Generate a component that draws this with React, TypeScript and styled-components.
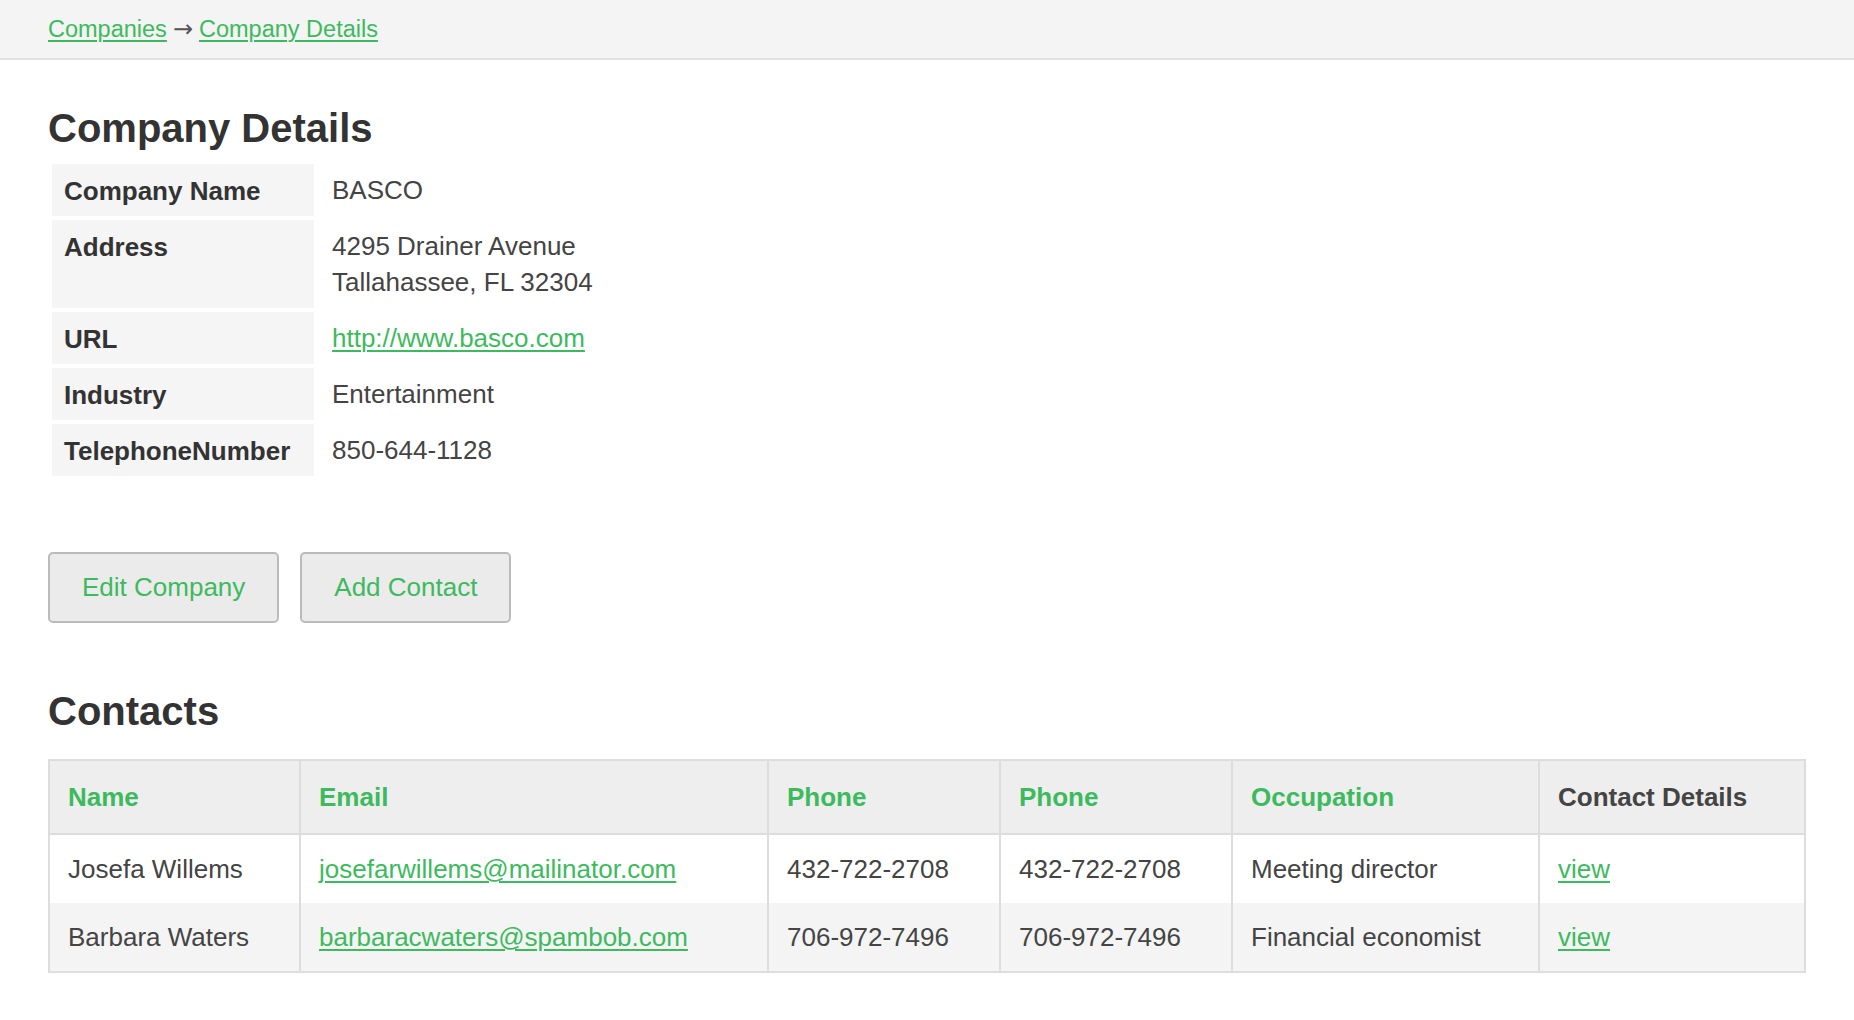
import React from "react";
import styled, { createGlobalStyle } from "styled-components";

interface Contact {
  name: string;
  email: string;
  phone: string;
  mobile: string;
  occupation: string;
}

const contacts: Contact[] = [
  {
    name: "Josefa Willems",
    email: "josefarwillems@mailinator.com",
    phone: "432-722-2708",
    mobile: "432-722-2708",
    occupation: "Meeting director",
  },
  {
    name: "Barbara Waters",
    email: "barbaracwaters@spambob.com",
    phone: "706-972-7496",
    mobile: "706-972-7496",
    occupation: "Financial economist",
  },
];

const columnWidths = [251, 468, 232, 232, 307];

const GREEN = "#3dba5e";

const GlobalStyle = createGlobalStyle`
  body {
    margin: 0;
    background: #fff;
    color: #444;
    font-family: "Liberation Sans", Arial, Helvetica, sans-serif;
  }
`;

const App = () => {
  return (
    <>
      <GlobalStyle />
      <Breadcrumbs>
        <Link href="#">Companies</Link>
        <Arrow>→</Arrow>
        <Link href="#">Company Details</Link>
      </Breadcrumbs>

      <Main>
        <Heading>Company Details</Heading>
        <DetailsTable>
          <tbody>
            <tr>
              <Label>Company Name</Label>
              <Value>BASCO</Value>
            </tr>
            <tr>
              <Label>Address</Label>
              <Value>
                4295 Drainer Avenue
                <br />
                Tallahassee, FL 32304
              </Value>
            </tr>
            <tr>
              <Label>URL</Label>
              <Value>
                <Link href="#">http://www.basco.com</Link>
              </Value>
            </tr>
            <tr>
              <Label>Industry</Label>
              <Value>Entertainment</Value>
            </tr>
            <tr>
              <Label>TelephoneNumber</Label>
              <Value>850-644-1128</Value>
            </tr>
          </tbody>
        </DetailsTable>

        <Actions>
          <Button>Edit Company</Button>
          <Button>Add Contact</Button>
        </Actions>

        <SectionHeading>Contacts</SectionHeading>
        <ContactsTable>
          <colgroup>
            {columnWidths.map((w, i) => (
              <col key={i} style={{ width: w }} />
            ))}
            <col />
          </colgroup>
          <thead>
            <tr>
              <HeadCell sortable>Name</HeadCell>
              <HeadCell sortable>Email</HeadCell>
              <HeadCell sortable>Phone</HeadCell>
              <HeadCell sortable>Phone</HeadCell>
              <HeadCell sortable>Occupation</HeadCell>
              <HeadCell>Contact Details</HeadCell>
            </tr>
          </thead>
          <tbody>
            {contacts.map((c) => (
              <Row key={c.email}>
                <Cell>{c.name}</Cell>
                <Cell>
                  <Link href="#">{c.email}</Link>
                </Cell>
                <Cell>{c.phone}</Cell>
                <Cell>{c.mobile}</Cell>
                <Cell>{c.occupation}</Cell>
                <Cell>
                  <Link href="#">view</Link>
                </Cell>
              </Row>
            ))}
          </tbody>
        </ContactsTable>
      </Main>
    </>
  );
};

export default App;

const Breadcrumbs = styled.nav`
  display: flex;
  align-items: center;
  height: 58px;
  padding: 0 48px;
  background: #f4f4f4;
  border-bottom: 2px solid #e1e1e1;
  font-size: 23.5px;
  line-height: 34px;
`;

const Link = styled.a`
  color: ${GREEN};
  text-decoration: underline;
  text-underline-offset: 3px;
  text-decoration-thickness: 2px;
`;

const Arrow = styled.span`
  color: #555;
  margin: 0 6px;
  font-family: "DejaVu Sans", sans-serif;
  font-size: 24px;
`;

const Main = styled.main`
  padding: 0 48px 60px;
`;

const Heading = styled.h1`
  margin: 44px 0 8px;
  font-size: 40px;
  line-height: 48px;
  font-weight: 700;
  color: #333;
`;

const SectionHeading = styled(Heading)`
  margin: 64px 0 24px;
`;

const DetailsTable = styled.table`
  border-collapse: separate;
  border-spacing: 4px;
  font-size: 26px;
  line-height: 36px;
`;

const Label = styled.th`
  width: 238px;
  padding: 9px 12px 7px;
  background: #f5f5f5;
  color: #333;
  font-weight: 700;
  text-align: left;
  vertical-align: top;
`;

const Value = styled.td`
  padding: 8px 14px;
  color: #444;
  vertical-align: top;
`;

const Actions = styled.div`
  display: flex;
  gap: 21px;
  margin-top: 72px;
`;

const Button = styled.button`
  padding: 15px 32px;
  background: #ebebeb;
  border: 2px solid #bbb;
  border-radius: 5px;
  color: ${GREEN};
  font-family: inherit;
  font-size: 26px;
  line-height: 37px;
  cursor: pointer;
`;

const ContactsTable = styled.table`
  width: 100%;
  table-layout: fixed;
  border-collapse: collapse;
  border: 2px solid #ddd;
  font-size: 26px;
  line-height: 36px;
`;

const HeadCell = styled.th<{ sortable?: boolean }>`
  padding: 18px;
  background: #eee;
  border: 2px solid #ddd;
  color: ${(props) => (props.sortable ? GREEN : "#444")};
  font-weight: 700;
  text-align: left;
  white-space: nowrap;
`;

const Row = styled.tr`
  &:nth-child(even) {
    background: #f4f4f4;
  }
`;

const Cell = styled.td`
  padding: 16px 18px;
  border-left: 2px solid #ddd;
  border-right: 2px solid #ddd;
  color: #444;
  white-space: nowrap;
`;
